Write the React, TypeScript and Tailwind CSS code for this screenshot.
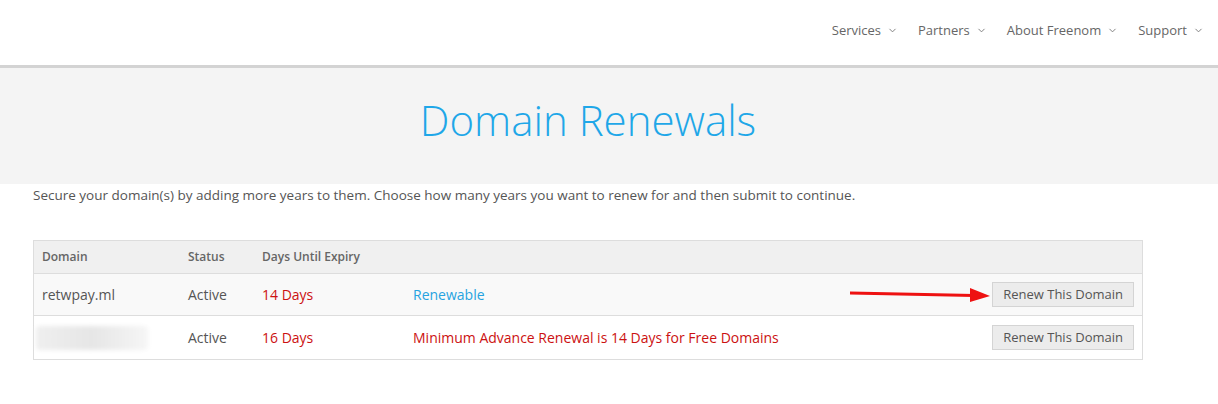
import React from 'react';
import { ChevronDown } from 'lucide-react';

const navItems = ['Services', 'Partners', 'About Freenom', 'Support'];

const rows = [
  {
    domain: 'retwpay.ml',
    status: 'Active',
    days: '14 Days',
    note: 'Renewable',
    noteClass: 'text-[#27a3e0]',
    bg: 'bg-[#f9f9f9]',
    arrow: true,
  },
  {
    domain: '',
    status: 'Active',
    days: '16 Days',
    note: 'Minimum Advance Renewal is 14 Days for Free Domains',
    noteClass: 'text-[#cc1111]',
    bg: 'bg-white',
    arrow: false,
  },
];

const App = () => {
  return (
    <div className="min-h-screen bg-white font-['Open_Sans',sans-serif] text-[#555]">
      {/* Header */}
      <header className="h-[65px] flex items-center justify-end pr-[14px]">
        <nav className="flex items-center gap-[20px] text-[13px] text-[#666] pb-[4px]">
          {navItems.map((item) => (
            <span key={item} className="flex items-center gap-[6px]">
              {item}
              <ChevronDown size={11} strokeWidth={2} className="text-[#777]" />
            </span>
          ))}
        </nav>
      </header>

      {/* Title band */}
      <section className="border-t-[3px] border-[#d3d3d3] bg-[#f4f4f4] h-[119px] flex items-center justify-center pr-[42px]">
        <h1 className="text-[42px] font-light text-[#1fa7e8] pb-[14px]">Domain Renewals</h1>
      </section>

      {/* Content */}
      <section className="px-[33px]">
        <p className="text-[13.5px] text-[#555] leading-[22px]">
          Secure your domain(s) by adding more years to them. Choose how many years you want to renew for and then submit to continue.
        </p>

        <div className="mt-[34px] w-[1110px] border border-[#dddddd] text-[14px]">
          <div className="grid grid-cols-[146px_74px_151px_1fr] items-center h-[33px] bg-[#f0f0f0] border-b border-[#dddddd] pl-[8px] text-[12px] font-semibold text-[#666]">
            <span>Domain</span>
            <span>Status</span>
            <span>Days Until Expiry</span>
            <span></span>
          </div>
          {rows.map((row, i) => (
            <div
              key={i}
              className={`grid grid-cols-[146px_74px_151px_1fr_auto] items-center pl-[8px] pr-[8px] ${row.bg} ${i === 0 ? 'h-[42px] border-b border-[#dddddd]' : 'h-[43px]'}`}
            >
              <span className="text-[#555]">
                {row.domain ? (
                  row.domain
                ) : (
                  <span className="block w-[112px] h-[24px] -ml-[6px] rounded-sm bg-gradient-to-r from-[#efefef] via-[#e6e6e6] to-[#f6f6f6] blur-[2px]"></span>
                )}
              </span>
              <span>{row.status}</span>
              <span className="text-[#cc1111]">{row.days}</span>
              <span className={`${row.noteClass} flex items-center`}>
                <span>{row.note}</span>
                {row.arrow && (
                  <svg className="ml-auto mr-[2px]" width="140" height="16" viewBox="0 0 140 16">
                    <line x1="0" y1="6" x2="124" y2="8.5" stroke="#ee1111" strokeWidth="3" />
                    <polygon points="120,1 140,9 120,15" fill="#ee1111" />
                  </svg>
                )}
              </span>
              <button className="h-[25px] px-[10px] bg-[#ececec] border border-[#d4d4d4] text-[13px] text-[#555] leading-none">
                Renew This Domain
              </button>
            </div>
          ))}
        </div>
      </section>
    </div>
  );
};

export default App;
